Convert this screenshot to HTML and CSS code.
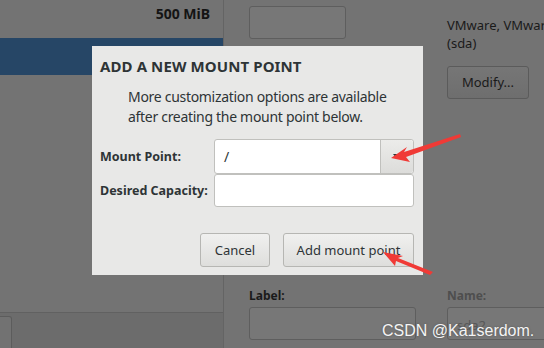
FILE: index.html
```html
<!DOCTYPE html>
<html lang="en">
<head>
  <meta charset="UTF-8">
  <title>Add a new mount point</title>
  <link rel="stylesheet" href="styles.css">
</head>
<body>
  <div class="screen">
    <div class="left-pane">
      <div class="size-row">500 MiB</div>
      <div class="selected-row"></div>
      <div class="left-spacer"></div>
      <div class="left-bottom">
        <div class="stub-button"></div>
      </div>
    </div>

    <div class="right-pane">
      <div class="top-grid">
        <div class="col-a">
          <div class="dim-entry small"></div>
        </div>
        <div class="col-b">
          <div class="device-text">VMware, VMware<br>(sda)</div>
          <div class="dim-button">Modify...</div>
        </div>
      </div>
      <div class="bottom-grid">
        <div class="col-a">
          <div class="dim-label">Label:</div>
          <div class="dim-entry wide"></div>
        </div>
        <div class="col-b">
          <div class="dim-label light">Name:</div>
          <div class="dim-entry name">sda2</div>
        </div>
      </div>
    </div>

    <div class="dialog">
      <h1>ADD A NEW MOUNT POINT</h1>
      <p class="info">More customization options are available<br>after creating the mount point below.</p>
      <div class="form">
        <label>Mount Point:</label>
        <div class="combo">
          <div class="combo-text">/</div>
          <div class="combo-arrow">
            <svg width="8" height="5" viewBox="0 0 8 5"><path d="M0 0 L8 0 L4 5 Z" fill="#2e3436"/></svg>
          </div>
        </div>
        <label>Desired Capacity:</label>
        <div class="entry"></div>
      </div>
      <div class="actions">
        <button class="btn cancel">Cancel</button>
        <button class="btn add">Add mount point</button>
      </div>
    </div>

    <svg class="arrows" width="544" height="348" viewBox="0 0 544 348">
      <path d="M460 134 L404 152 L407 147 L391 158 L410 162 L406 157 L461 137 Z" fill="#f03a36"/>
      <path d="M433 272 L398 258 L403 256 L383 252 L395 266 L396 261 L430 275 Z" fill="#f03a36"/>
    </svg>

    <div class="watermark">CSDN @Ka1serdom.</div>
  </div>
</body>
</html>
```

FILE: styles.css
```css
body {
  margin: 0;
  padding: 0;
  font-family: 'Noto Sans', 'Open Sans', sans-serif;
  background-color: #737373;
}
.screen {
  position: relative;
  width: 544px;
  height: 348px;
  overflow: hidden;
  display: grid;
  grid-template-columns: 224px 1fr;
  background-color: #737373;
}

/* left pane */
.left-pane {
  display: flex;
  flex-direction: column;
  border-right: 1px solid #646464;
}
.size-row {
  height: 38px;
  box-sizing: border-box;
  padding: 4px 13px 0 0;
  text-align: right;
  font-size: 14px;
  font-weight: bold;
  color: #141414;
}
.selected-row {
  height: 37px;
  background-color: #264666;
}
.left-spacer {
  flex: 1;
}
.left-bottom {
  height: 36px;
  border-top: 1px solid #616161;
  background-color: #6c6c6c;
  padding-top: 3px;
  box-sizing: border-box;
}
.stub-button {
  width: 11px;
  height: 40px;
  border: 1px solid #5c5c5c;
  border-left: none;
  border-radius: 0 3px 0 0;
  background-color: #727272;
}

/* right pane */
.right-pane {
  display: flex;
  flex-direction: column;
  justify-content: space-between;
  min-width: 0;
}
.top-grid,
.bottom-grid {
  display: grid;
  grid-template-columns: 198px 1fr;
  padding-left: 25px;
}
.col-b {
  min-width: 0;
}
.device-text {
  margin-top: 16px;
  font-size: 13px;
  line-height: 18px;
  color: #1a1a1a;
  white-space: nowrap;
}
.dim-button {
  width: 82px;
  height: 33px;
  box-sizing: border-box;
  margin-top: 14px;
  border: 1px solid #5b5b5b;
  border-radius: 3px;
  background: linear-gradient(#767676, #6e6e6e);
  font-size: 13px;
  line-height: 31px;
  text-align: center;
  color: #1a1a1a;
}
.dim-entry {
  box-sizing: border-box;
  height: 33px;
  border: 1px solid #5e5e5e;
  border-radius: 3px;
  background-color: #777777;
}
.dim-entry.small {
  width: 97px;
  margin-top: 6px;
}
.dim-entry.wide {
  width: 167px;
}
.dim-entry.name {
  width: 120px;
  font-size: 13px;
  padding: 8px 0 0 9px;
  color: #585858;
}
.dim-label {
  font-size: 12px;
  font-weight: bold;
  color: #1a1a1a;
  height: 20px;
}
.dim-label.light {
  color: #4e4e4e;
}
.bottom-grid {
  margin-bottom: 8px;
}

/* dialog */
.dialog {
  position: absolute;
  left: 92px;
  top: 46px;
  width: 331px;
  height: 229px;
  box-sizing: border-box;
  background-color: #e8e8e7;
  padding: 10px 9px 0 8px;
  color: #2e3436;
}
.dialog h1 {
  margin: 0;
  font-size: 15px;
  font-weight: bold;
  line-height: 20px;
  letter-spacing: 0.1px;
}
.info {
  margin: 11px 0 0 28px;
  font-size: 14px;
  line-height: 20px;
  letter-spacing: -0.3px;
}
.form {
  display: grid;
  grid-template-columns: 114px 200px;
  grid-template-rows: 35px 33px;
  align-items: center;
  margin-top: 12px;
}
.form label {
  font-size: 12.5px;
  font-weight: bold;
}
.combo {
  display: flex;
  height: 35px;
  box-sizing: border-box;
  border: 1px solid #c0c0bd;
  border-radius: 3px;
  background-color: #fff;
}
.combo-text {
  flex: 1;
  padding: 7px 0 0 9px;
  font-size: 14px;
}
.combo-arrow {
  width: 32px;
  border-left: 1px solid #c0c0bd;
  background: linear-gradient(#ececea, #dcdcda);
  display: flex;
  align-items: center;
  justify-content: center;
  border-radius: 0 3px 3px 0;
}
.entry {
  height: 33px;
  box-sizing: border-box;
  border: 1px solid #c0c0bd;
  border-radius: 3px;
  background-color: #fff;
}
.actions {
  display: flex;
  justify-content: flex-end;
  gap: 13px;
  margin: 26px 0 0 0;
}
.btn {
  height: 34px;
  box-sizing: border-box;
  border: 1px solid #b6b6b3;
  border-radius: 3px;
  background: linear-gradient(#f0f0ef, #dededc);
  font-family: 'Noto Sans', 'Open Sans', sans-serif;
  font-size: 13px;
  color: #2e3436;
  padding: 0;
}
.btn.cancel {
  width: 70px;
}
.btn.add {
  width: 131px;
}

/* overlays */
.arrows {
  position: absolute;
  left: 0;
  top: 0;
}
.watermark {
  position: absolute;
  left: 382px;
  top: 322px;
  font-family: 'Liberation Sans', sans-serif;
  font-size: 16px;
  color: #f4f4f4;
  text-shadow: 0 0 2px #555;
}
```
